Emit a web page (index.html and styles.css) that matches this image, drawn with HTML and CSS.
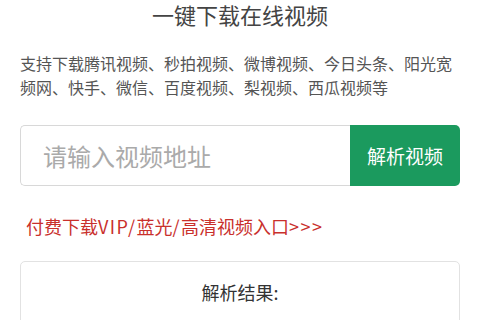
FILE: index.html
```html
<!DOCTYPE html>
<html lang="zh">
<head>
<meta charset="utf-8">
<link rel="stylesheet" href="styles.css">
</head>
<body>
<div class="page">
  <h1 class="title">一键下载在线视频</h1>
  <p class="desc">支持下载腾讯视频、秒拍视频、微博视频、今日头条、阳光宽频网、快手、微信、百度视频、梨视频、西瓜视频等</p>
  <div class="search">
    <input class="url" type="text" placeholder="请输入视频地址">
    <button class="parse">解析视频</button>
  </div>
  <a class="vip" href="#">付费下载<span class="latin">VIP/</span>蓝光<span class="latin">/</span>高清视频入口<span class="latin">&gt;&gt;&gt;</span></a>
  <div class="result">
    <div class="result-title">解析结果:</div>
  </div>
</div>
</body>
</html>
```
FILE: styles.css
```css
html, body {
  margin: 0;
  padding: 0;
  background: #fff;
  overflow: hidden;
}
body {
  font-family: "Noto Sans CJK SC", "Liberation Sans", sans-serif;
  color: #333;
}
.page {
  width: 440px;
  margin: 0 auto;
  padding: 0 20px;
  box-sizing: content-box;
  display: flex;
  flex-direction: column;
}
.title {
  margin: 1px 0 0 0;
  font-size: 22px;
  font-weight: 400;
  line-height: 26px;
  text-align: center;
  color: #444;
}
.desc {
  margin: 24px 0 0 0;
  font-size: 16px;
  line-height: 24px;
  color: #555;
}
.search {
  margin-top: 26px;
  display: flex;
  height: 61px;
}
.url {
  flex: 1;
  min-width: 0;
  box-sizing: border-box;
  border: 1px solid #d8d8d8;
  border-right: none;
  border-radius: 5px 0 0 5px;
  padding: 0 0 0 22px;
  font-family: inherit;
  font-size: 24px;
  color: #333;
  outline: none;
}
.url::placeholder {
  color: #aaa;
}
.parse {
  width: 110px;
  border: none;
  border-radius: 0 5px 5px 0;
  background: #1b9a5e;
  color: #fff;
  font-family: inherit;
  font-size: 19px;
  padding: 0;
}
.vip {
  margin: 28px 0 0 6px;
  font-size: 18px;
  line-height: 24px;
  color: #c9302c;
  text-decoration: none;
}
.latin {
  letter-spacing: 1.5px;
}
.result {
  margin-top: 23px;
  border: 1px solid #e2e2e2;
  border-radius: 5px;
  height: 120px;
}
.result-title {
  text-align: center;
  font-size: 18px;
  line-height: 24px;
  margin-top: 18px;
  color: #333;
}
```
